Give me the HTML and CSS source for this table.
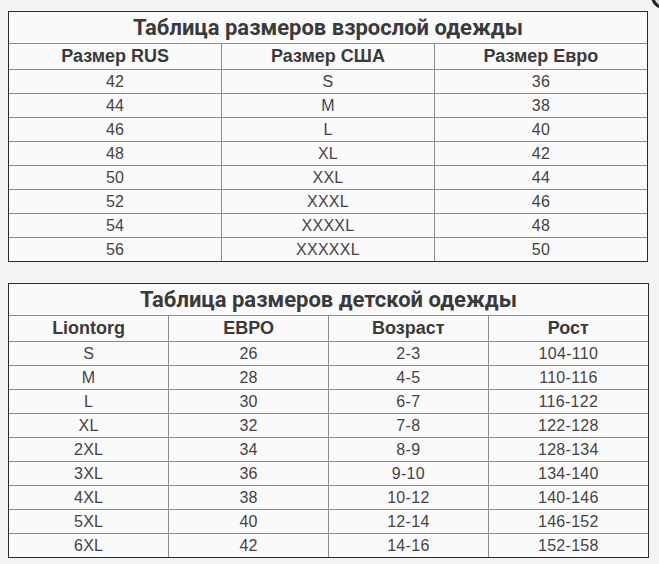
FILE: index.html
```html
<!DOCTYPE html>
<html lang="ru">
<head>
<meta charset="utf-8">
<title>Таблицы размеров</title>
<link rel="stylesheet" href="styles.css">
</head>
<body>
<div class="corner"></div>
<main class="page">
  <div class="sheet adult">
    <table>
      <tr><th class="title" colspan="3">Таблица размеров взрослой одежды</th></tr>
      <tr class="head"><th>Размер RUS</th><th>Размер США</th><th>Размер Евро</th></tr>
      <tr><td>42</td><td>S</td><td>36</td></tr>
      <tr><td>44</td><td>M</td><td>38</td></tr>
      <tr><td>46</td><td>L</td><td>40</td></tr>
      <tr><td>48</td><td>XL</td><td>42</td></tr>
      <tr><td>50</td><td>XXL</td><td>44</td></tr>
      <tr><td>52</td><td>XXXL</td><td>46</td></tr>
      <tr><td>54</td><td>XXXXL</td><td>48</td></tr>
      <tr><td>56</td><td>XXXXXL</td><td>50</td></tr>
    </table>
  </div>
  <div class="sheet kids">
    <table>
      <tr><th class="title" colspan="4">Таблица размеров детской одежды</th></tr>
      <tr class="head"><th>Liontorg</th><th>ЕВРО</th><th>Возраст</th><th>Рост</th></tr>
      <tr><td>S</td><td>26</td><td>2-3</td><td>104-110</td></tr>
      <tr><td>M</td><td>28</td><td>4-5</td><td>110-116</td></tr>
      <tr><td>L</td><td>30</td><td>6-7</td><td>116-122</td></tr>
      <tr><td>XL</td><td>32</td><td>7-8</td><td>122-128</td></tr>
      <tr><td>2XL</td><td>34</td><td>8-9</td><td>128-134</td></tr>
      <tr><td>3XL</td><td>36</td><td>9-10</td><td>134-140</td></tr>
      <tr><td>4XL</td><td>38</td><td>10-12</td><td>140-146</td></tr>
      <tr><td>5XL</td><td>40</td><td>12-14</td><td>146-152</td></tr>
      <tr><td>6XL</td><td>42</td><td>14-16</td><td>152-158</td></tr>
    </table>
  </div>
</main>
</body>
</html>
```
FILE: styles.css
```css
html, body {
  margin: 0;
  padding: 0;
  background: #f4f4f4;
}
body {
  width: 659px;
  height: 564px;
  overflow: hidden;
  position: relative;
  font-family: "Liberation Sans", Arial, sans-serif;
  color: #444;
}
.corner {
  position: absolute;
  left: 651px;
  top: -17px;
  width: 20px;
  height: 20px;
  border-radius: 50%;
  border: 3px solid #222;
  background: #ddd;
}
.page {
  display: flex;
  flex-direction: column;
  gap: 21px;
  padding: 11px 0 0 8px;
}
.sheet {
  border: 1px solid #2b2b2b;
  background: #fafafa;
  box-sizing: border-box;
}
.adult { width: 640px; }
.kids { width: 641px; }
table {
  width: 100%;
  border-collapse: collapse;
  table-layout: fixed;
}
th, td {
  border: 1px solid #8c8c8c;
  padding: 0;
  text-align: center;
  vertical-align: middle;
}
tr:first-child th { border-top: none; }
tr:last-child td { border-bottom: none; }
th:first-child, td:first-child { border-left: none; }
th:last-child, td:last-child { border-right: none; }
.title {
  height: 31px;
  font-family: Roboto, "Liberation Sans", sans-serif;
  font-weight: 700;
  font-size: 22px;
  color: #3a3a3a;
}
.head th {
  height: 25px;
  font-weight: 700;
  font-size: 18px;
  color: #3a3a3a;
}
td {
  height: 23px;
  font-size: 16px;
  letter-spacing: 0.3px;
  color: #444;
}
```
